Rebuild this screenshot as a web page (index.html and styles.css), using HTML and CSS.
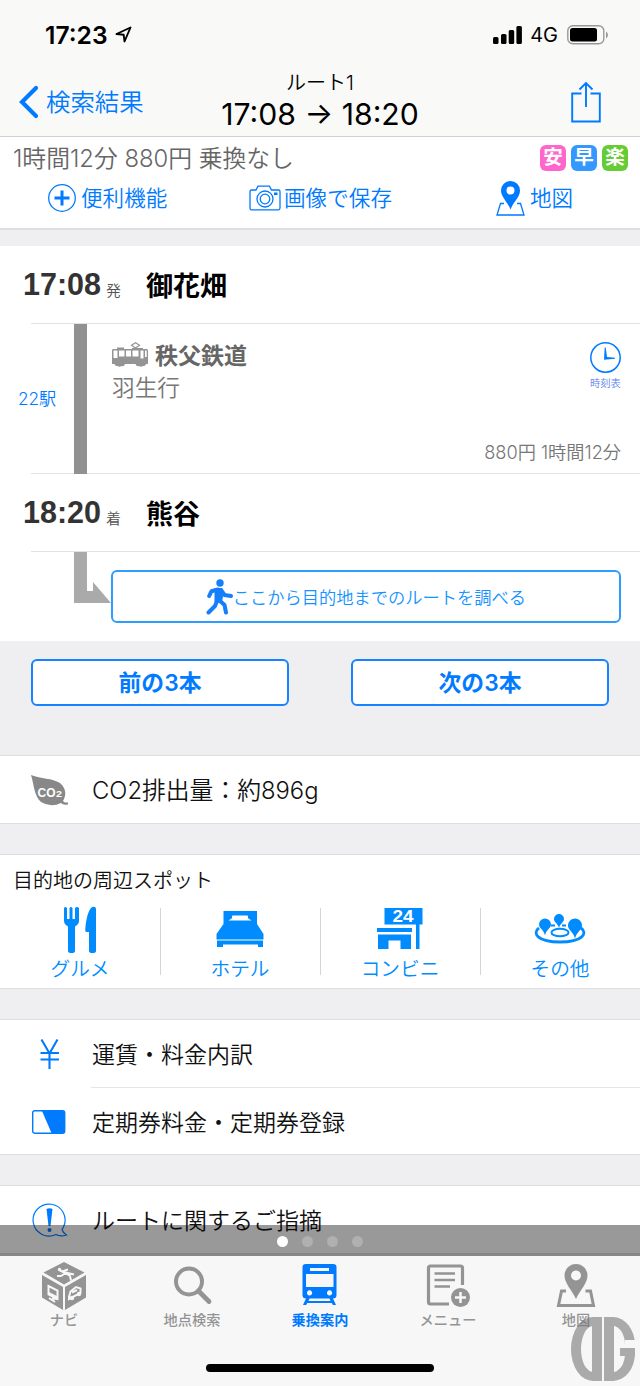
FILE: index.html
```html
<!DOCTYPE html>
<html lang="ja">
<head>
<meta charset="utf-8">
<title>ルート1</title>
<link rel="stylesheet" href="styles.css">
</head>
<body>
<div class="screen">
  <div class="status">
    <div class="clock"><span class="clock-text">17:23</span>
      <svg width="18" height="18" viewBox="0 0 18 18"><path d="M1.5 8 15.5 1.5 9.5 15.5 8.7 8.8Z" fill="none" stroke="#000" stroke-width="1.9" stroke-linejoin="round"/></svg>
    </div>
    <div class="signals">
      <svg width="29" height="18" viewBox="0 0 29 18"><rect x="0" y="11" width="5.5" height="7" rx="1.5"/><rect x="8" y="8" width="5.5" height="10" rx="1.5"/><rect x="15.7" y="4" width="5.5" height="14" rx="1.5"/><rect x="23.4" y="0" width="5.5" height="18" rx="1.5"/></svg>
      <span class="carrier">4G</span>
      <svg width="42" height="20" viewBox="0 0 42 20"><rect x=".8" y=".8" width="36" height="18" rx="5" fill="none" stroke="#999" stroke-width="1.4"/><rect x="3" y="3" width="27" height="13.5" rx="2.5"/><path d="M39 6.5q2 1 2 3.500t-2 3.500z" fill="#999"/></svg>
    </div>
  </div>

  <header class="nav">
    <div class="back">
      <svg width="20" height="34" viewBox="0 0 20 34"><path d="M17 3 3 17 17 31" fill="none" stroke="#007aff" stroke-width="4.2" stroke-linecap="round"/></svg>
      <span>検索結果</span>
    </div>
    <div class="heading">
      <div class="heading-sub">ルート1</div>
      <div class="heading-main">17:08 → 18:20</div>
    </div>
    <svg class="share" width="30" height="42" viewBox="0 0 30 42"><path d="M10.5 12.500H1.200V40.500H28.800V12.500H19.500M15 26V2M8.500 8.500 15 2 21.500 8.500" fill="none" stroke="#007aff" stroke-width="1.9"/></svg>
  </header>

  <section class="summary">
    <div class="summary-top">
      <span class="summary-text">1時間12分 880円 乗換なし</span>
      <span class="badges"><b class="badge pink">安</b><b class="badge blue">早</b><b class="badge green">楽</b></span>
    </div>
    <div class="actions">
      <div class="action a1">
        <svg width="28" height="28" viewBox="0 0 28 28"><circle cx="14" cy="14" r="13.3" fill="none" stroke="#007aff" stroke-width="1.3"/><path d="M14 6.500v15M6.500 14h15" stroke="#007aff" stroke-width="3"/></svg>
        <span>便利機能</span>
      </div>
      <div class="action a2">
        <svg width="32" height="26" viewBox="0 0 32 26" fill="none" stroke="#007aff" stroke-width="1.3"><path d="M2.500 5H7L9 1.200H20.500L22.500 5H29.500Q31 5 31 6.500V23Q31 24.800 29.500 24.800H2.500Q1 24.800 1 23V6.500Q1 5 2.500 5Z"/><circle cx="16" cy="14" r="8"/><circle cx="16" cy="14" r="4.8"/><path d="M25 8.800h3.500" stroke-width="2.6"/></svg>
        <span>画像で保存</span>
      </div>
      <div class="action a3">
        <svg width="29" height="35" viewBox="0 0 29 35"><path d="M8 22.500H4.500L1 34H28L24.500 22.500H21" fill="none" stroke="#007aff" stroke-width="1.3"/><path d="M14.500 0A9.500 9.500 0 0 0 5 9.500C5 16 11 20 14.500 28.500 18 20 24 16 24 9.500A9.500 9.500 0 0 0 14.500 0ZM14.500 5.500a4 4 0 1 1 0 8 4 4 0 0 1 0-8Z" fill="#007aff" fill-rule="evenodd"/></svg>
        <span>地図</span>
      </div>
    </div>
  </section>

  <section class="route">
    <div class="station s1"><b class="time">17:08</b><span class="mark">発</span><b class="name">御花畑</b></div>
    <div class="leg">
      <div class="stops">22駅</div>
      <div class="bar"></div>
      <div class="ride">
        <div class="ride-head">
          <div>
            <div class="line-name">
              <svg width="36" height="25" viewBox="0 0 36 25" fill="#949494"><path fill-rule="evenodd" d="M1 7H5V5.500H12V7H20V6H31V7H35Q36 7 36 9V22H34Q33.500 24.500 31 24 29 25.500 27 24 24.500 25 23.500 22H13Q12 25 9.500 24 7.500 25.500 5.500 24 3 24.500 2.500 22H0V9Q0 7 1 7ZM1.500 8.500V16H5.500V8.500ZM7 8.500V14.500H12.500V8.500ZM14 8.500V14.500H19V8.500ZM20.500 8.500V14.500H26.500V8.500ZM28.500 8.500V16.500H31.500V8.500ZM33 8.500V15H34.700V8.500Z"/><path d="M23.500 6 19.500 3.200 23.500 .8 27.500 3.200Z" fill="none" stroke="#949494" stroke-width="1.2"/></svg>
              <b>秩父鉄道</b>
            </div>
            <div class="bound">羽生行</div>
          </div>
          <div class="timetable">
            <svg width="31" height="31" viewBox="0 0 31 31"><circle cx="15.5" cy="15.5" r="14.7" fill="none" stroke="#007aff" stroke-width="1.5"/><path d="M14.700 5.500H15.700L17 15 25 15.800V16.800L14 17.800Z" fill="#007aff"/></svg>
            <span>時刻表</span>
          </div>
        </div>
        <div class="fare">880円 1時間12分</div>
      </div>
    </div>
    <div class="station s2"><b class="time">18:20</b><span class="mark">着</span><b class="name">熊谷</b></div>
    <div class="onward">
      <svg class="elbow" width="37" height="51" viewBox="0 0 37 51"><path d="M0 0H13V39H19V30L37 51H0Z" fill="#aaa"/></svg>
      <div class="onward-btn">
        <svg width="27" height="36" viewBox="0 0 27 36"><circle cx="14" cy="4" r="3.7" fill="#147efb"/><path d="M3.200 17 5.500 12.200 12 10.500M15 11 18.500 16 25 17M11 22 9 27 2.500 33.500M13 21 18.500 26 20 33.500" fill="none" stroke="#147efb" stroke-width="4" stroke-linecap="round" stroke-linejoin="round"/><path d="M9 9.500 16 9.500 17 14 15.500 23H9Z" fill="#147efb" stroke="#147efb"/></svg>
        <span>ここから目的地までのルートを調べる</span>
      </div>
    </div>
  </section>

  <div class="pagers"><b class="pager">前の3本</b><b class="pager">次の3本</b></div>

  <section class="group">
    <div class="row co-row">
      <svg class="row-icon" width="37" height="32" viewBox="0 0 37 32"><path d="M0 1C10 5 21 4 29 9 36 15 35 22 32 27 33.500 29 35 28.500 37 28.500V30.500Q32 31.500 30 29 20 34 10 28C3 22 3 10 0 1Z" fill="#888"/><text x="6.5" y="22.5" class="co" textLength="18" lengthAdjust="spacingAndGlyphs">CO</text><text x="25" y="23" class="co2" textLength="6" lengthAdjust="spacingAndGlyphs">2</text></svg>
      <span>CO2排出量：約896g</span>
    </div>
  </section>

  <section class="group spots">
    <div class="spots-title">目的地の周辺スポット</div>
    <div class="spots-grid">
      <div class="spot"><svg width="34" height="48" viewBox="0 0 34 48" fill="#008cff"><path d="M1 2Q2.500 0 4 2V13H6.500V2Q8 0 9.500 2V13H12V2Q14 0 16 2V15Q16 18 12 20.500V45Q12 47 8.500 47T5 45V20.500Q1 18 1 15Z"/><path d="M29 1Q33 0 33 3V45Q33 47 29.500 47T26 45V26H23.500Q22 26 22.300 23C23 14 25 4 29 1Z"/></svg><span>グルメ</span></div>
      <div class="spot"><svg width="48" height="48" viewBox="0 0 48 48" fill="#008cff"><path fill-rule="evenodd" d="M7.500 5H41V18L47.500 28V33.500H.5V28L7.500 18ZM12.500 14.500H35.500L32 12.200V10.500Q32 9.500 31 9.500H17Q16 9.500 16 10.500V12.200Z"/><path d="M1 34.500H47V41H42V38.500H7V41H1Z"/></svg><span>ホテル</span></div>
      <div class="spot"><svg width="48" height="48" viewBox="0 0 48 48" fill="#008cff"><path d="M8.500 2H46.500V18.500H43.500V43H40V18.500H8.500Z"/><path d="M1 22H36V26H1ZM2 28.500H35V43H24.500V34.500H12.500V43H2Z"/><text x="16.500" y="15.700" class="sign" textLength="21" lengthAdjust="spacingAndGlyphs">24</text></svg><span>コンビニ</span></div>
      <div class="spot"><svg width="52" height="48" viewBox="0 0 52 48"><path d="M5 22C-2 27 3 36 26 36S54 27 47 22" fill="none" stroke="#008cff" stroke-width="2.800"/><ellipse cx="26" cy="26.500" rx="8.500" ry="3.800" fill="none" stroke="#008cff" stroke-width="2"/><path d="M17 19.500H21M28 19.500H32" stroke="#008cff" stroke-width="2"/><g fill="#008cff"><path d="M11 12.500a6 6 0 0 1 6 6C17 22.500 12.500 23 11 29.500 9.500 23 5 22.500 5 18.500a6 6 0 0 1 6-6Z"/><path d="M25 8a5 5 0 0 1 5 5C30 16.500 26.200 17 25 22 23.800 17 20 16.500 20 13a5 5 0 0 1 5-5Z"/><path d="M41 12.500a7 7 0 0 1 7 7C48 24.500 43 25 41 32.500 39 25 34 24.500 34 19.500a7 7 0 0 1 7-7Z"/></g></svg><span>その他</span></div>
    </div>
  </section>

  <section class="group links">
    <div class="row">
      <svg class="row-icon" width="37" height="32" viewBox="0 0 37 32"><path d="M10.500 1.500 18.500 15.500 26.500 1.500M18.500 15V31M9.500 15H28M9.500 21.500H28" fill="none" stroke="#007aff" stroke-width="2.1"/></svg>
      <span>運賃・料金内訳</span>
    </div>
    <div class="row">
      <svg class="row-icon" width="37" height="24" viewBox="0 0 37 24"><rect x="1.700" y=".7" width="32" height="22.500" rx="2" fill="none" stroke="#007aff" stroke-width="1.4"/><path d="M11 1H32Q34 1 34 2.500V21.500Q34 23 32 23H20.500Z" fill="#007aff"/></svg>
      <span>定期券料金・定期券登録</span>
    </div>
  </section>

  <section class="group last">
    <div class="row">
      <svg class="row-icon" width="37" height="36" viewBox="0 0 37 36"><path d="M32.500 25A16 16 0 1 0 25 32.500Q29 35 35.500 33 32 31 31 27.500A16 16 0 0 0 32.500 25Z" fill="none" stroke="#007aff" stroke-width="1.2"/><path d="M15.500 7Q18.500 5.500 21.500 7L19.500 24H17.500Z" fill="#007aff"/><circle cx="18.5" cy="28" r="2" fill="#007aff"/></svg>
      <span>ルートに関するご指摘</span>
    </div>
  </section>

  <div class="pages"><i class="on"></i><i></i><i></i><i></i></div>

  <footer class="tabs">
    <div class="tab"><svg width="44" height="48" viewBox="0 0 44 48"><path d="M22 0 42.500 10.500 22 22.500 1.500 10.500ZM0 13 21 25V48L0 35.500ZM44 13 23 25V48L44 35.500Z" fill="#949494"/><g stroke="#f7f7f7" fill="none" stroke-width="2"><path d="M18 8.500 23.500 11 28 14 29 18.500M23.500 11 19 14 15 14M20 9.500 26 7.500M23.500 10.500 32 12.500"/><path d="M6.500 24 15.500 28.500V37L6.500 32.500Z"/><path d="M6.500 31 15.500 35.500M7 36 13 40M15.500 37 10 36.500"/><path d="M27 35 28.500 29.500 34 25 38.500 26.500V31L27 37ZM30 30.500 35 28"/></g><circle cx="17.500" cy="7.500" r="1.700" fill="#f7f7f7"/><circle cx="30" cy="36" r="2.200" fill="#f7f7f7"/><circle cx="37" cy="32" r="2.200" fill="#f7f7f7"/></svg><span>ナビ</span></div>
    <div class="tab"><svg width="44" height="48" viewBox="0 0 44 48"><circle cx="19" cy="19.500" r="13" fill="none" stroke="#949494" stroke-width="4"/><path d="M28.500 29 39 39.500" stroke="#949494" stroke-width="4.800" stroke-linecap="round"/></svg><span>地点検索</span></div>
    <div class="tab active"><svg width="44" height="48" viewBox="0 0 44 48"><path fill="#007aff" fill-rule="evenodd" d="M8 2H35Q38.500 2 38.500 5V33Q38.500 36.500 35 36.500L38 43H34.800L33.800 41H9.200L8.200 43H5L8 36.500Q4.500 36.500 4.500 33V5Q4.500 2 8 2ZM12 6V9H31V6ZM8 12V25H35.500V12ZM11.500 28.300a2.600 2.600 0 1 0 .1 0ZM31.500 28.300a2.600 2.600 0 1 0 .1 0ZM11.500 36.500 10.500 39H32.500L31.500 36.500Z"/></svg><span>乗換案内</span></div>
    <div class="tab"><svg width="44" height="48" viewBox="0 0 44 48"><path d="M36.500 23V6Q36.500 4 34.500 4H4.500Q2.500 4 2.500 6V40Q2.500 42 4.500 42H23" fill="none" stroke="#949494" stroke-width="3.200"/><path d="M8.500 11.500H29M8.500 18H29M8.500 24.500H24" stroke="#949494" stroke-width="2.400"/><circle cx="34.500" cy="35.500" r="9.500" fill="#949494"/><path d="M34.500 30V41M29 35.500H40" stroke="#f7f7f7" stroke-width="2.500"/></svg><span>メニュー</span></div>
    <div class="tab"><svg width="44" height="48" viewBox="0 0 44 48"><path d="M12 29H7.500L4.500 43.500H39.500L36.500 29H31.500" fill="none" stroke="#949494" stroke-width="3"/><path d="M22 2A11.500 11.500 0 0 0 10.500 13.500C10.500 21.500 18 28 22 37 26 28 33.500 21.500 33.500 13.500A11.500 11.500 0 0 0 22 2ZM22 8.500a5 5 0 1 1 0 10 5 5 0 0 1 0-10Z" fill="#949494" fill-rule="evenodd"/></svg><span>地図</span></div>
    <div class="home"></div>
    <div class="watermark"><div class="wm-left"></div><div class="wm-right"><i class="wm-gap"></i><i class="wm-bar"></i></div></div>
  </footer>
</div>
</body>
</html>
```
FILE: styles.css
```css
* { box-sizing: border-box; }
body { margin: 0; background: #efeff1; font-family: Inter, "Noto Sans CJK JP", sans-serif; }
svg { display: block; flex: none; }
b { font-weight: 700; }
.screen { position: relative; width: 640px; height: 1386px; overflow: hidden; display: flex; flex-direction: column; background: #efeff1; font-weight: 350; white-space: nowrap; }
.screen > * { flex: none; }

.status { height: 72px; background: #f9f9f8; display: flex; justify-content: space-between; padding: 0 31px 0 45px; }
.clock, .signals { display: flex; align-items: center; height: 70px; }
.clock { gap: 7px; }
.clock-text { font-size: 24.6px; font-weight: 600; }
.carrier { font-size: 20px; font-weight: 400; margin: 0 9px 0 8px; }

.nav { height: 65px; background: #f9f9f8; border-bottom: 1px solid #d0d0d0; display: grid; grid-template-columns: 200px 240px 200px; }
.back { display: flex; align-items: center; color: #007aff; font-size: 24.4px; padding: 0 0 4px 19px; gap: 7px; height: 64px; }
.back span { margin-top: -3px; }
.heading { text-align: center; color: #000; }
.heading-sub { font-size: 20px; line-height: 22px; }
.heading-main { font-size: 30.2px; line-height: 40px; font-weight: 400; }
.share { justify-self: end; margin: 9px 39px 0 0; }

.summary { height: 93px; background: #fff; border-bottom: 2px solid #dedee0; }
.summary-top { display: flex; justify-content: space-between; padding: 7px 12px 0 13px; height: 41px; }
.summary-text { font-size: 23.8px; line-height: 30px; color: #666; }
.badges { display: flex; gap: 5px; padding-top: 1px; }
.badge { width: 26px; height: 26px; border-radius: 6px; color: #fff; font-size: 19.5px; line-height: 25px; text-align: center; }
.pink { background: #ff66cc; }
.blue { background: #3399ff; }
.green { background: #66cc33; }
.actions { display: grid; grid-template-columns: 249px 247px 144px; }
.action { display: flex; align-items: center; height: 40px; gap: 5px; color: #007aff; font-size: 21.6px; }
.action span { margin-top: -4px; }
.a1 { padding-left: 48px; }
.a2 { gap: 3px; }

.route { margin-top: 16px; height: 395px; background: #fff; }
.station { display: flex; align-items: center; height: 77px; }
.time { font: bold 30.5px "Liberation Sans", sans-serif; color: #333; width: 83px; margin-left: 23px; }
.mark { font-size: 15px; color: #555; width: 40px; padding-top: 9px; }
.name { font-size: 27px; color: #000; }
.leg { display: grid; grid-template-columns: 43px 13px 1fr; margin-left: 31px; height: 151px; border-top: 1px solid #e2e2e4; border-bottom: 1px solid #e2e2e4; }
.stops { margin-left: -13px; font-size: 17.2px; line-height: 150px; color: #007aff; }
.bar { background: #919191; }
.ride { padding: 15px 19px 0 25px; display: flex; flex-direction: column; }
.ride-head { display: flex; justify-content: space-between; }
.line-name { display: flex; gap: 7px; height: 30px; align-items: center; font-size: 23px; color: #666; }
.line-name b { font-weight: 600; }
.bound { font-size: 22.7px; line-height: 37px; color: #777; }
.timetable { color: #5c83ef; font-size: 10.3px; line-height: 20px; padding-top: 3px; }
.fare { text-align: right; font-size: 18.2px; line-height: 26px; color: #777; margin-top: 33px; }
.onward { margin-left: 31px; border-top: 1px solid #e2e2e4; display: flex; padding-left: 43px; }
.onward-btn { width: 510px; height: 53px; margin-top: 18px; border: 2px solid #2f9dff; border-radius: 6px; display: flex; align-items: center; justify-content: center; color: #1593ff; font-size: 17.25px; }

.pagers { display: flex; justify-content: space-between; padding: 18px 31px 0; height: 114px; }
.pager { width: 258px; height: 47px; border: 2px solid #1683ff; border-radius: 6px; background: #fff; color: #007aff; font-size: 22.8px; line-height: 44px; text-align: center; font-weight: 600; }

.group { background: #fff; border-top: 1px solid #dedee0; border-bottom: 1px solid #dedee0; margin-bottom: 30px; }
.row { display: flex; align-items: center; height: 67px; padding-left: 31px; gap: 24px; font-size: 23px; color: #111; }
.row span { margin-top: -2px; }
.co-row { font-size: 23.8px; }
.links .row + .row { margin: 1px 0 0 91px; padding: 0; box-shadow: 0 -1px 0 #e5e5e7; }
.links .row + .row svg { margin-left: -60px; }
.co { font: bold 13px "Liberation Sans", sans-serif; fill: #fff; }
.co2 { font: bold 9.5px "Liberation Sans", sans-serif; fill: #fff; }
.spots { height: 135px; }
.spots-title { font-size: 20px; line-height: 30px; padding: 11px 0 0 13px; color: #111; }
.spots-grid { display: grid; grid-template-columns: repeat(4, 1fr); margin-top: 9px; }
.spot { display: flex; flex-direction: column; align-items: center; color: #008cff; font-size: 19.7px; line-height: 26px; height: 76px; padding-top: 1px; }
.spot span { margin-top: 2px; }
.spot + .spot { background: linear-gradient(#d5d5d5, #d5d5d5) 0 3px / 1px 67px no-repeat; }
.sign { font: bold 16.5px "Liberation Sans", sans-serif; fill: #fff; }
.links { height: 136px; }
.last { margin: 0; }

.pages { position: absolute; left: 0; top: 1225px; width: 640px; height: 31px; background: rgba(0,0,0,.4); border-bottom: 2px solid #888; display: flex; justify-content: center; gap: 14px; padding-top: 11px; }
.pages i { width: 11px; height: 11px; border-radius: 50%; background: #b0b0b0; }
.pages .on { background: #fff; }

.tabs { position: absolute; left: 0; top: 1256px; width: 640px; height: 130px; background: #f7f7f7; display: grid; grid-template-columns: repeat(5, 1fr); padding-top: 6px; }
.tab { display: flex; flex-direction: column; align-items: center; color: #949494; font-size: 14.2px; line-height: 20px; font-weight: 500; }
.active { color: #007aff; font-weight: 700; }
.home { position: absolute; left: 206px; top: 108px; width: 228px; height: 8px; border-radius: 4px; background: #000; }

/* Mirrored monogram in the corner */
.watermark { position: absolute; left: 571px; top: 61px; display: flex; gap: 2px; opacity: .6; }
.wm-left, .wm-right { width: 31px; height: 64px; border: solid #777; border-width: 9px 10px; }
.wm-left { border-radius: 22px 0 0 22px / 32px 0 0 32px; }
.wm-right { position: relative; border-radius: 0 22px 22px 0 / 0 28px 28px 0; }
.wm-gap, .wm-bar { position: absolute; }
.wm-gap { left: 11px; top: 14px; width: 11px; height: 9px; background: #f7f7f7; }
.wm-bar { left: 6px; top: 22px; width: 15px; height: 8px; background: #777; }
```
